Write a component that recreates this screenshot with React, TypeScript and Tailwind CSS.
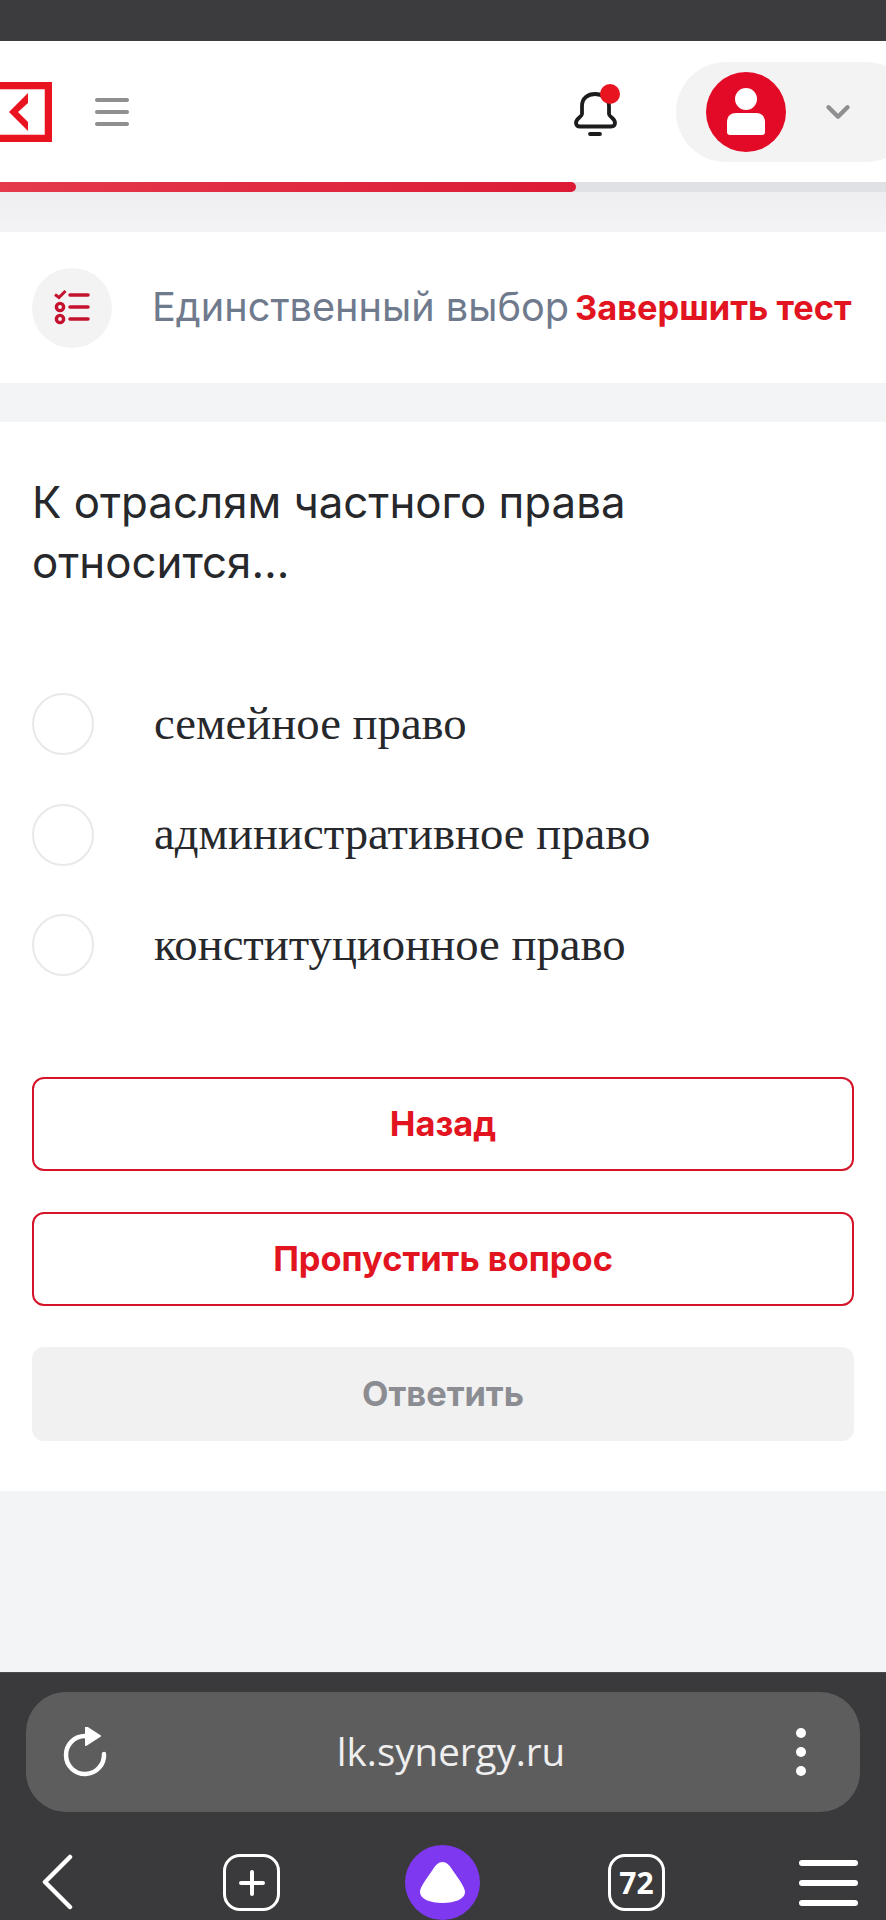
import { ChevronDown } from "lucide-react";

const options = ["семейное право", "административное право", "конституционное право"];

function Logo() {
  return (
    <svg width="52" height="60" viewBox="0 0 52 60" fill="none">
      <path d="M0 3.500H48.500V56.500H0" stroke="#e8141f" strokeWidth="7.500" />
      <path d="M28 11 L9 30 L28 49 L28 40 L18 30 L28 21 Z" fill="#e8141f" />
    </svg>
  );
}

function Bell() {
  return (
    <div className="relative h-[56px] w-[48px]">
      <svg width="46" height="50" viewBox="0 0 46 50" fill="none" className="absolute left-0 top-[4px]">
        <path
          d="M9 18C9 10 15 6 22 6C29 6 36 10 36 18V26C36 29 42 30 42 35C42 37.500 40.500 38.500 38 38.500H7C4.500 38.500 3 37.500 3 35C3 30 9 29 9 26Z"
          stroke="#1c1c1e"
          strokeWidth="3.800"
        />
        <path d="M17 46H27" stroke="#1c1c1e" strokeWidth="3.800" strokeLinecap="round" />
      </svg>
      <span className="absolute left-[27px] top-0 size-[20px] rounded-full bg-[#e8141f]" />
    </div>
  );
}

function ListIcon() {
  return (
    <svg width="36" height="36" viewBox="0 0 36 36" fill="none" stroke="#c4122f">
      <path d="M1 4.500L5 7.500L11.500 1" strokeWidth="3" />
      <path d="M16 5H34M16 17H34M16 29H34" strokeWidth="3.500" strokeLinecap="round" />
      <circle cx="6" cy="17" r="3.600" strokeWidth="3.400" />
      <circle cx="6" cy="29" r="3.600" strokeWidth="3.400" />
    </svg>
  );
}

export default function App() {
  return (
    <div className="flex h-[1920px] w-[886px] flex-col overflow-hidden bg-[#f3f4f6] font-['Inter',sans-serif]">
      <div className="h-[41px] shrink-0 bg-[#3c3c3e]" />

      <header className="flex h-[141px] shrink-0 items-center bg-white">
        <Logo />
        <div className="ml-[43px] flex w-[34px] flex-col gap-[8px]">
          <span className="h-[4px] rounded-full bg-[#8f8f91]" />
          <span className="h-[4px] rounded-full bg-[#8f8f91]" />
          <span className="h-[4px] rounded-full bg-[#8f8f91]" />
        </div>
        <div className="ml-auto mr-[55px]">
          <Bell />
        </div>
        <div className="mr-[-30px] flex h-[100px] w-[240px] items-center rounded-full bg-[#f3f3f4] pl-[30px]">
          <div className="flex size-[80px] items-center justify-center rounded-full bg-[#e20a27]">
            <svg width="40" height="48" viewBox="0 0 40 48" fill="white">
              <circle cx="20" cy="11" r="11" />
              <path d="M1 34C1 28 5 25 10 25H30C35 25 39 28 39 34V44C39 46 38 47 36 47H4C2 47 1 46 1 44Z" />
            </svg>
          </div>
          <ChevronDown className="ml-[33px] text-[#8f8f91]" size={38} strokeWidth={2.800} />
        </div>
      </header>

      <div className="h-[10px] shrink-0 bg-[#dfe1e4]">
        <div className="h-full w-[576px] rounded-r-[5px] bg-[linear-gradient(90deg,#e43a4c,#dc1a35)]" />
      </div>

      <div className="h-[40px] shrink-0 bg-[linear-gradient(180deg,#eeeef0,#f4f4f7)]" />

      <section className="flex h-[151px] shrink-0 items-center bg-white pl-[32px]">
        <div className="flex size-[80px] shrink-0 items-center justify-center rounded-full bg-[#f3f3f4]">
          <ListIcon />
        </div>
        <span className="ml-[40px] whitespace-nowrap text-[39.700px] font-normal text-[#6f7a8d]">Единственный выбор</span>
        <span className="ml-[6px] whitespace-nowrap text-[34.400px] font-bold text-[#e2141f]">Завершить тест</span>
      </section>

      <div className="h-[39px] shrink-0" />

      <main className="h-[1069px] shrink-0 bg-white px-[32px] pt-[51px]">
        <h1 className="text-[43.800px] leading-[60px] font-normal text-[#26282b]">
          К отраслям частного права
          <br />
          относится…
        </h1>

        <ul className="mt-[100px] flex flex-col gap-[48.500px]">
          {options.map((o) => (
            <li key={o} className="flex h-[62px] items-center">
              <span className="size-[62px] shrink-0 rounded-full border-2 border-[#e9e9ea]" />
              <span className="ml-[60px] pb-[2px] font-['Liberation_Serif',serif] text-[46.700px] text-[#26282b]">{o}</span>
            </li>
          ))}
        </ul>

        <div className="mt-[101px] flex flex-col gap-[41px]">
          <button className="h-[94px] rounded-[12px] border-[2.500px] border-[#d5142a] text-[34.400px] font-bold text-[#e2141f]">Назад</button>
          <button className="h-[94px] rounded-[12px] border-[2.500px] border-[#d5142a] text-[34.400px] font-bold text-[#e2141f]">Пропустить вопрос</button>
          <button className="h-[94px] rounded-[12px] bg-[#f1f1f2] text-[34.400px] font-bold text-[#8b8d92]">Ответить</button>
        </div>
      </main>

      <div className="flex-1" />

      <footer className="flex h-[248px] shrink-0 flex-col border-t border-[#4a4a4c] bg-[#3a3a3c] pt-[19px]">
        <div className="relative mx-[26px] flex h-[120px] items-center justify-between rounded-[40px] bg-[#5d5d5e] pl-[37px] pr-[54px]">
          <svg width="46" height="50" viewBox="0 0 46 50" fill="none">
            <path d="M41 27A19 19 0 1 1 22 9" stroke="white" strokeWidth="4.500" strokeLinecap="round" />
            <path d="M23 0L37 9L23 18Z" fill="white" stroke="white" strokeWidth="2" strokeLinejoin="round" />
          </svg>
          <span className="absolute inset-x-0 pl-[16px] text-center font-['Open_Sans',sans-serif] text-[38.500px] text-white/90">lk.synergy.ru</span>
          <div className="flex flex-col gap-[9px]">
            <span className="size-[10px] rounded-full bg-white" />
            <span className="size-[10px] rounded-full bg-white" />
            <span className="size-[10px] rounded-full bg-white" />
          </div>
        </div>

        <nav className="mt-[33px] flex items-start">
          <svg width="32" height="56" viewBox="0 0 32 56" fill="none" className="ml-[41px] mt-[9px]">
            <path d="M29 3L4 28L29 53" stroke="white" strokeWidth="4.500" strokeLinecap="round" strokeLinejoin="round" />
          </svg>
          <div className="ml-[150px] mt-[9px] flex size-[57px] items-center justify-center rounded-[17px] border-[3.500px] border-white">
            <svg width="28" height="28" viewBox="0 0 28 28" stroke="white" strokeWidth="4" strokeLinecap="round">
              <path d="M14 3V25M3 14H25" />
            </svg>
          </div>
          <div className="ml-[125px] flex size-[75px] items-center justify-center rounded-full bg-[#7e39f0]">
            <svg width="45" height="43" viewBox="0 0 45 43" fill="white">
              <path d="M22.500 1C26.500 1 29.500 4 32.500 9C38.500 18 45 26 45 31C45 38 35 42 22.500 42C10 42 0 38 0 31C0 26 6.500 18 12.500 9C15.500 4 18.500 1 22.500 1Z" />
            </svg>
          </div>
          <div className="ml-[128px] mt-[9px] flex size-[57px] items-center justify-center rounded-[17px] border-[3.500px] border-white font-['Open_Sans',sans-serif] text-[30px] font-bold text-white">72</div>
          <div className="ml-[134px] mt-[15px] flex w-[59px] flex-col gap-[14px]">
            <span className="h-[6px] rounded-full bg-white" />
            <span className="h-[6px] rounded-full bg-white" />
            <span className="h-[6px] rounded-full bg-white" />
          </div>
        </nav>
      </footer>
    </div>
  );
}
